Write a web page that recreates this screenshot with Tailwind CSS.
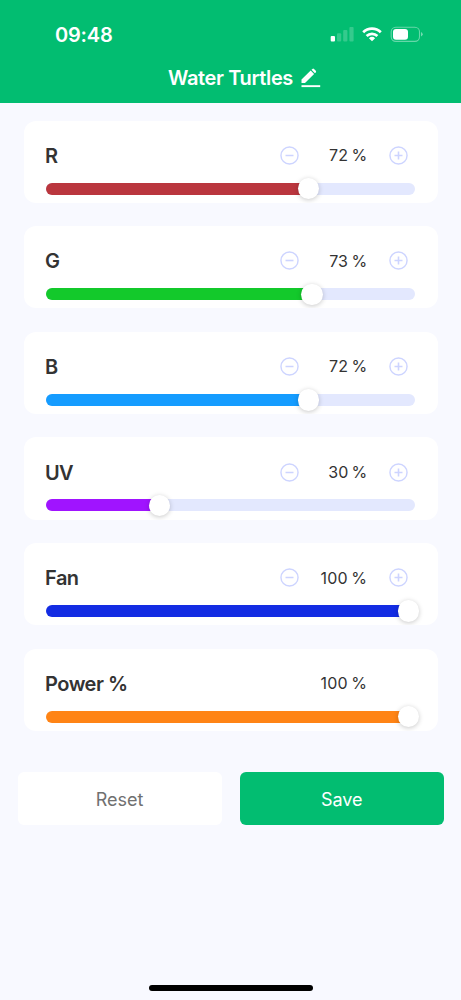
<!DOCTYPE html>
<html lang="en">
<head>
<meta charset="utf-8">
<meta name="viewport" content="width=device-width, initial-scale=1">
<title>Water Turtles</title>
<script src="https://cdn.jsdelivr.net/npm/@tailwindcss/browser@4"></script>
</head>
<body class="bg-[#f8f9ff] font-['Inter','Liberation_Sans',sans-serif] text-[#333]">
<svg class="hidden">
  <symbol id="minus" viewBox="0 0 20 20"><circle cx="10" cy="10" r="9" fill="none" stroke="#cdd4ff" stroke-width="1.5"/><path d="M5.8 10h8.4" stroke="#cdd4ff" stroke-width="1.7"/></symbol>
  <symbol id="plus" viewBox="0 0 20 20"><circle cx="10" cy="10" r="9" fill="none" stroke="#cdd4ff" stroke-width="1.5"/><path d="M5.8 10h8.4M10 5.8v8.4" stroke="#cdd4ff" stroke-width="1.7"/></symbol>
</svg>
<div class="flex h-[1000px] w-[461px] flex-col overflow-hidden">
  <header class="h-[103px] shrink-0 bg-[#02bd71] text-white">
    <div class="flex h-[58px] items-center justify-between pt-[11px] pr-[38px] pl-[55px]">
      <span class="text-[20px] leading-6 font-semibold tracking-[-0.2px]">09:48</span>
      <svg class="-mt-[2px] h-[20px] w-[93px]" viewBox="330 24 93 20" fill="#fff">
        <rect x="330.7" y="36" width="4.3" height="5.5" rx="1"/>
        <g opacity=".2"><rect x="337" y="33.3" width="4.2" height="8.2" rx="1"/><rect x="343.2" y="30" width="4.2" height="11.5" rx="1"/><rect x="349.4" y="27" width="4.2" height="14.5" rx="1"/></g>
        <g fill="none" stroke="#fff" stroke-width="2.7"><path d="M363.2 32.3a12.5 12.5 0 0 1 17.6 0"/><path d="M366.6 36a7.7 7.7 0 0 1 10.8 0"/></g>
        <path d="M368.9 38.2a4.5 4.5 0 0 1 6.2 0L372 41.3z"/>
        <rect x="391.2" y="27.2" width="28.3" height="14.2" rx="4.6" fill="none" stroke="#fff" stroke-opacity=".4" stroke-width="1.1"/>
        <rect x="393" y="29" width="15" height="10.7" rx="3"/>
        <path d="M421 32v4.5q1.7-.7 1.7-2.25T421 32z" opacity=".45"/>
      </svg>
    </div>
    <div class="flex h-[40px] items-center gap-[8px] pl-[168px]">
      <h1 class="w-[125px] text-[20px] leading-6 font-semibold tracking-[-0.38px] whitespace-nowrap">Water Turtles</h1>
      <svg class="h-[20px] w-[20px] -translate-y-[0.5px]" viewBox="301 67 20 20" fill="#fff"><path d="M301.5 82.5v-3.4l9.2-9 3.4 3.4-9.1 9zM311.5 69.3l.9-.9q.8-.7 1.6 0l1.8 1.9q.7.8 0 1.6l-.9.8z"/><rect x="301.5" y="84.7" width="18.7" height="2"/></svg>
    </div>
  </header>
  <main class="flex flex-col gap-[23.3px] pt-[17.6px] pr-[23.5px] pl-[23.5px]">
    <section class="h-[82.3px] overflow-hidden rounded-[12px] bg-white pt-[22.2px]">
      <div class="flex h-[25px] items-center justify-between pr-[29.2px] pl-[21.5px]"><h2 class="pt-px text-[20px] leading-6 font-semibold">R</h2><div class="flex items-center"><svg class="size-[19px]"><use href="#minus"/></svg><span class="w-[90px] pr-[22px] text-right text-[16px] tracking-[0.2px] [word-spacing:-1.5px] whitespace-nowrap">72 %</span><svg class="size-[19px]"><use href="#plus"/></svg></div></div>
      <div class="relative mt-[14.9px] mr-[22.3px] ml-[22.2px] h-[12px] rounded-full bg-[#e3e8fe]"><div class="h-full w-[263px] rounded-l-full bg-[#ba363e]"></div><i class="absolute -top-[4.7px] left-[252.1px] size-[21.4px] rounded-full bg-white shadow-[0_1px_5px_#00000038]"></i></div>
    </section>
    <section class="h-[82.3px] overflow-hidden rounded-[12px] bg-white pt-[22.2px]">
      <div class="flex h-[25px] items-center justify-between pr-[29.2px] pl-[21.5px]"><h2 class="pt-px text-[20px] leading-6 font-semibold tracking-[-0.3px]">G</h2><div class="flex items-center"><svg class="size-[19px]"><use href="#minus"/></svg><span class="w-[90px] pr-[22px] text-right text-[16px] tracking-[0.2px] [word-spacing:-1.5px] whitespace-nowrap">73 %</span><svg class="size-[19px]"><use href="#plus"/></svg></div></div>
      <div class="relative mt-[14.9px] mr-[22.3px] ml-[22.2px] h-[12px] rounded-full bg-[#e3e8fe]"><div class="h-full w-[266px] rounded-l-full bg-[#13c92b]"></div><i class="absolute -top-[4.7px] left-[255.7px] size-[21.4px] rounded-full bg-white shadow-[0_1px_5px_#00000038]"></i></div>
    </section>
    <section class="h-[82.3px] overflow-hidden rounded-[12px] bg-white pt-[22.2px]">
      <div class="flex h-[25px] items-center justify-between pr-[29.2px] pl-[21.5px]"><h2 class="pt-px text-[20px] leading-6 font-semibold">B</h2><div class="flex items-center"><svg class="size-[19px]"><use href="#minus"/></svg><span class="w-[90px] pr-[22px] text-right text-[16px] tracking-[0.2px] [word-spacing:-1.5px] whitespace-nowrap">72 %</span><svg class="size-[19px]"><use href="#plus"/></svg></div></div>
      <div class="relative mt-[14.9px] mr-[22.3px] ml-[22.2px] h-[12px] rounded-full bg-[#e3e8fe]"><div class="h-full w-[263px] rounded-l-full bg-[#159cff]"></div><i class="absolute -top-[4.7px] left-[252.1px] size-[21.4px] rounded-full bg-white shadow-[0_1px_5px_#00000038]"></i></div>
    </section>
    <section class="h-[82.3px] overflow-hidden rounded-[12px] bg-white pt-[22.2px]">
      <div class="flex h-[25px] items-center justify-between pr-[29.2px] pl-[21.5px]"><h2 class="pt-px text-[20px] leading-6 font-semibold tracking-[-0.7px]">UV</h2><div class="flex items-center"><svg class="size-[19px]"><use href="#minus"/></svg><span class="w-[90px] pr-[22px] text-right text-[16px] tracking-[0.1px] [word-spacing:-1.5px] whitespace-nowrap">30 %</span><svg class="size-[19px]"><use href="#plus"/></svg></div></div>
      <div class="relative mt-[14.9px] mr-[22.3px] ml-[22.2px] h-[12px] rounded-full bg-[#e3e8fe]"><div class="h-full w-[114px] rounded-l-full bg-[#a014ff]"></div><i class="absolute -top-[4.7px] left-[103.1px] size-[21.4px] rounded-full bg-white shadow-[0_1px_5px_#00000038]"></i></div>
    </section>
    <section class="h-[82.3px] overflow-hidden rounded-[12px] bg-white pt-[22.2px]">
      <div class="flex h-[25px] items-center justify-between pr-[29.2px] pl-[21.5px]"><h2 class="pt-px text-[20px] leading-6 font-semibold tracking-[-0.5px]">Fan</h2><div class="flex items-center"><svg class="size-[19px]"><use href="#minus"/></svg><span class="w-[90px] pr-[22px] text-right text-[16px] tracking-[0.3px] [word-spacing:-1.5px] whitespace-nowrap">100 %</span><svg class="size-[19px]"><use href="#plus"/></svg></div></div>
      <div class="relative mt-[14.9px] mr-[22.3px] ml-[22.2px] h-[12px] rounded-full"><div class="h-full w-[362px] rounded-l-full bg-[#132ce3]"></div><i class="absolute -top-[4.7px] left-[352.2px] size-[21.4px] rounded-full bg-white shadow-[0_1px_5px_#00000038]"></i></div>
    </section>
    <section class="h-[82.3px] overflow-hidden rounded-[12px] bg-white pt-[22.2px]">
      <div class="flex h-[25px] items-center justify-between pr-[48.2px] pl-[21.5px]"><h2 class="pt-px text-[20px] leading-6 font-semibold tracking-[-0.5px]">Power %</h2><span class="w-[90px] pr-[22px] text-right text-[16px] tracking-[0.3px] [word-spacing:-1.5px] whitespace-nowrap">100 %</span></div>
      <div class="relative mt-[14.9px] mr-[22.3px] ml-[22.2px] h-[12px] rounded-full"><div class="h-full w-[362px] rounded-l-full bg-[#ff8415]"></div><i class="absolute -top-[4.7px] left-[352.2px] size-[21.4px] rounded-full bg-white shadow-[0_1px_5px_#00000038]"></i></div>
    </section>
  </main>
  <div class="mt-[41.2px] flex justify-between pr-[17.5px] pl-[17.5px]">
    <button class="h-[53px] w-[204px] rounded-[6px] bg-white pt-px text-[18px] text-[#707070]">Reset</button>
    <button class="h-[53px] w-[203.5px] rounded-[6px] bg-[#02bd71] pt-px text-[18px] text-white">Save</button>
  </div>
  <div class="mx-auto mt-auto mb-[9.3px] h-[6px] w-[164px] rounded-full bg-black"></div>
</div>
</body>
</html>
